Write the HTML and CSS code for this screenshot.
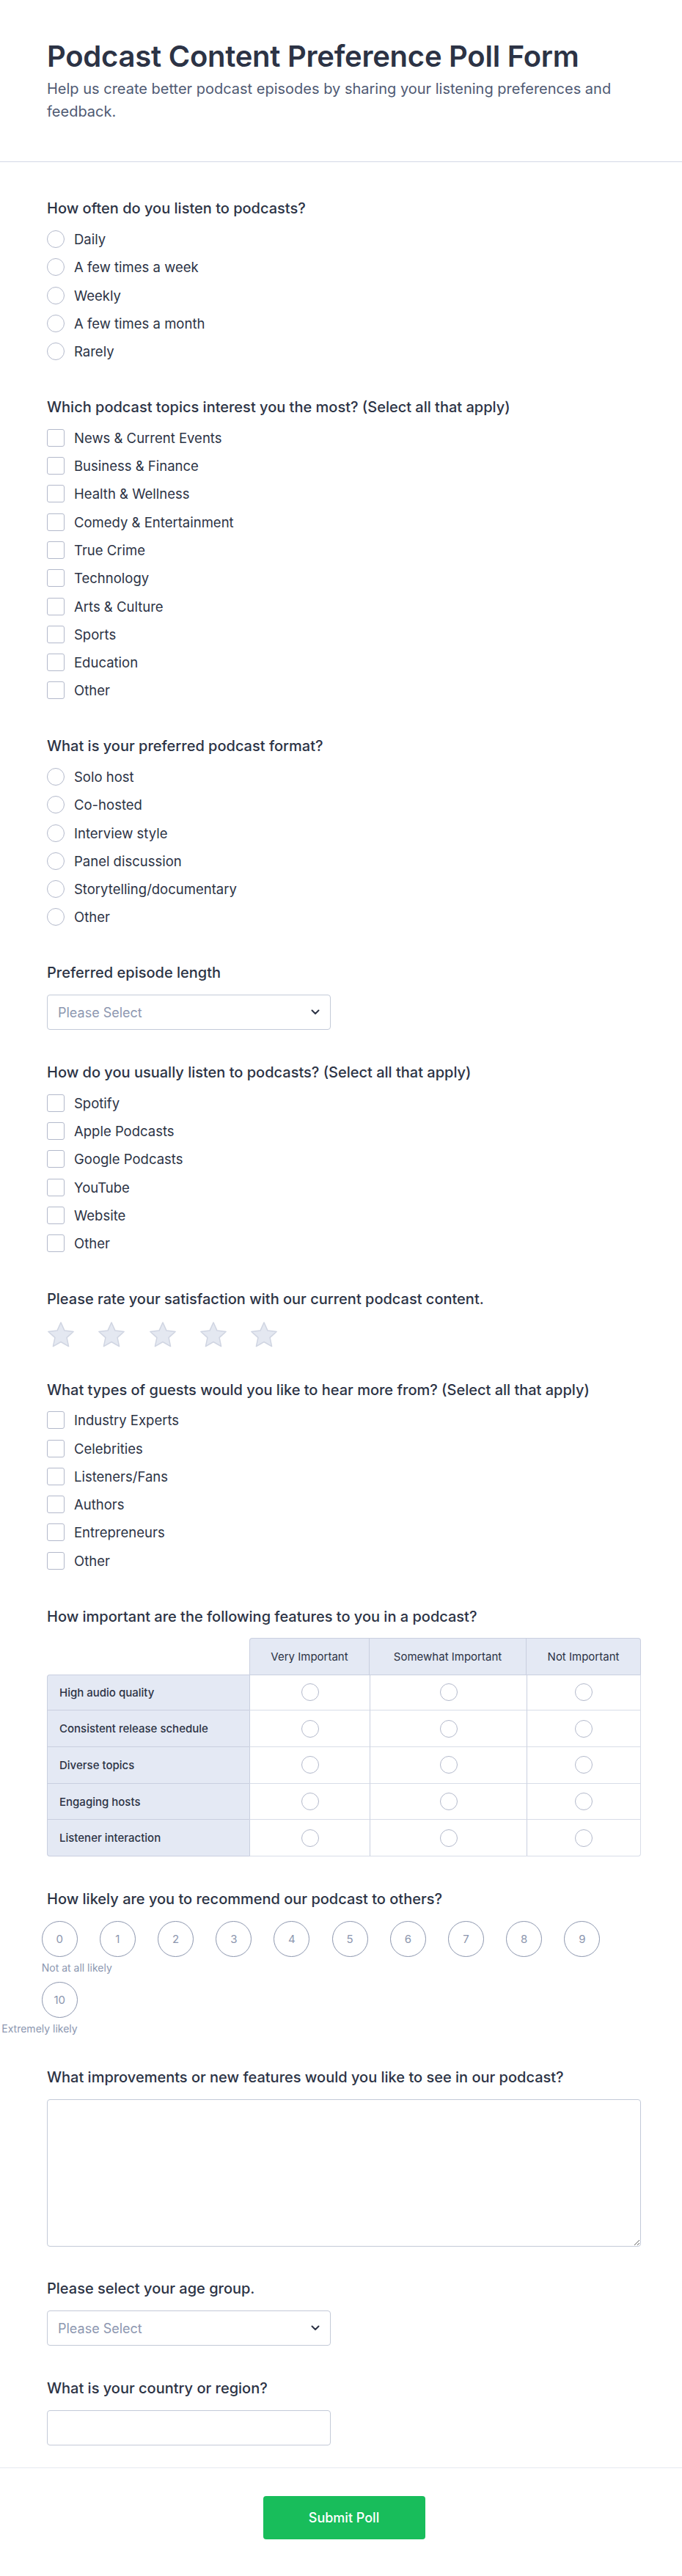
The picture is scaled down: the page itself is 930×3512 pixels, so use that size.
FILE: index.html
```html
<!DOCTYPE html>
<html lang="en">
<head>
<meta charset="utf-8">
<title>Podcast Content Preference Poll Form</title>
<link rel="stylesheet" href="styles.css">
</head>
<body>
<header class="header">
  <h1 class="title">Podcast Content Preference Poll Form</h1>
  <p class="subtitle">Help us create better podcast episodes by sharing your listening preferences and feedback.</p>
</header>

<form class="form-body">
  <div class="q">
    <div class="q-label">How often do you listen to podcasts?</div>
    <div class="options">
      <label class="opt"><span class="radio"></span>Daily</label>
      <label class="opt"><span class="radio"></span>A few times a week</label>
      <label class="opt"><span class="radio"></span>Weekly</label>
      <label class="opt"><span class="radio"></span>A few times a month</label>
      <label class="opt"><span class="radio"></span>Rarely</label>
    </div>
  </div>

  <div class="q">
    <div class="q-label">Which podcast topics interest you the most? (Select all that apply)</div>
    <div class="options">
      <label class="opt"><span class="check"></span>News &amp; Current Events</label>
      <label class="opt"><span class="check"></span>Business &amp; Finance</label>
      <label class="opt"><span class="check"></span>Health &amp; Wellness</label>
      <label class="opt"><span class="check"></span>Comedy &amp; Entertainment</label>
      <label class="opt"><span class="check"></span>True Crime</label>
      <label class="opt"><span class="check"></span>Technology</label>
      <label class="opt"><span class="check"></span>Arts &amp; Culture</label>
      <label class="opt"><span class="check"></span>Sports</label>
      <label class="opt"><span class="check"></span>Education</label>
      <label class="opt"><span class="check"></span>Other</label>
    </div>
  </div>

  <div class="q">
    <div class="q-label">What is your preferred podcast format?</div>
    <div class="options">
      <label class="opt"><span class="radio"></span>Solo host</label>
      <label class="opt"><span class="radio"></span>Co-hosted</label>
      <label class="opt"><span class="radio"></span>Interview style</label>
      <label class="opt"><span class="radio"></span>Panel discussion</label>
      <label class="opt"><span class="radio"></span>Storytelling/documentary</label>
      <label class="opt"><span class="radio"></span>Other</label>
    </div>
  </div>

  <div class="q">
    <div class="q-label">Preferred episode length</div>
    <div class="select">
      <span>Please Select</span>
      <svg class="chev" width="12" height="8" viewBox="0 0 12 8"><path d="M1.5 1.5l4.5 4.5 4.5-4.5" fill="none" stroke="#2c3345" stroke-width="2" stroke-linecap="round" stroke-linejoin="round"/></svg>
    </div>
  </div>

  <div class="q">
    <div class="q-label">How do you usually listen to podcasts? (Select all that apply)</div>
    <div class="options">
      <label class="opt"><span class="check"></span>Spotify</label>
      <label class="opt"><span class="check"></span>Apple Podcasts</label>
      <label class="opt"><span class="check"></span>Google Podcasts</label>
      <label class="opt"><span class="check"></span>YouTube</label>
      <label class="opt"><span class="check"></span>Website</label>
      <label class="opt"><span class="check"></span>Other</label>
    </div>
  </div>

  <div class="q">
    <div class="q-label">Please rate your satisfaction with our current podcast content.</div>
    <div class="stars">
      <svg class="star" width="38" height="35" viewBox="0 0 38 35"><polygon points="19,1 24,12.12 36.12,13.44 27.08,21.63 29.58,33.56 19,27.5 8.42,33.56 10.92,21.63 1.88,13.44 14,12.12"/></svg>
      <svg class="star" width="38" height="35" viewBox="0 0 38 35"><polygon points="19,1 24,12.12 36.12,13.44 27.08,21.63 29.58,33.56 19,27.5 8.42,33.56 10.92,21.63 1.88,13.44 14,12.12"/></svg>
      <svg class="star" width="38" height="35" viewBox="0 0 38 35"><polygon points="19,1 24,12.12 36.12,13.44 27.08,21.63 29.58,33.56 19,27.5 8.42,33.56 10.92,21.63 1.88,13.44 14,12.12"/></svg>
      <svg class="star" width="38" height="35" viewBox="0 0 38 35"><polygon points="19,1 24,12.12 36.12,13.44 27.08,21.63 29.58,33.56 19,27.5 8.42,33.56 10.92,21.63 1.88,13.44 14,12.12"/></svg>
      <svg class="star" width="38" height="35" viewBox="0 0 38 35"><polygon points="19,1 24,12.12 36.12,13.44 27.08,21.63 29.58,33.56 19,27.5 8.42,33.56 10.92,21.63 1.88,13.44 14,12.12"/></svg>
    </div>
  </div>

  <div class="q">
    <div class="q-label">What types of guests would you like to hear more from? (Select all that apply)</div>
    <div class="options">
      <label class="opt"><span class="check"></span>Industry Experts</label>
      <label class="opt"><span class="check"></span>Celebrities</label>
      <label class="opt"><span class="check"></span>Listeners/Fans</label>
      <label class="opt"><span class="check"></span>Authors</label>
      <label class="opt"><span class="check"></span>Entrepreneurs</label>
      <label class="opt"><span class="check"></span>Other</label>
    </div>
  </div>

  <div class="q">
    <div class="q-label">How important are the following features to you in a podcast?</div>
    <table class="matrix">
      <thead>
        <tr>
          <th class="blank"></th>
          <th class="col-h first">Very Important</th>
          <th class="col-h">Somewhat Important</th>
          <th class="col-h last">Not Important</th>
        </tr>
      </thead>
      <tbody>
        <tr><th class="row-h">High audio quality</th><td><span class="radio"></span></td><td><span class="radio"></span></td><td><span class="radio"></span></td></tr>
        <tr><th class="row-h">Consistent release schedule</th><td><span class="radio"></span></td><td><span class="radio"></span></td><td><span class="radio"></span></td></tr>
        <tr><th class="row-h">Diverse topics</th><td><span class="radio"></span></td><td><span class="radio"></span></td><td><span class="radio"></span></td></tr>
        <tr><th class="row-h">Engaging hosts</th><td><span class="radio"></span></td><td><span class="radio"></span></td><td><span class="radio"></span></td></tr>
        <tr><th class="row-h">Listener interaction</th><td><span class="radio"></span></td><td><span class="radio"></span></td><td><span class="radio"></span></td></tr>
      </tbody>
    </table>
  </div>

  <div class="q">
    <div class="q-label">How likely are you to recommend our podcast to others?</div>
    <div class="nps">
      <div class="nps-item"><span class="nps-circle">0</span><span class="nps-label">Not at all likely</span></div>
      <div class="nps-item"><span class="nps-circle">1</span></div>
      <div class="nps-item"><span class="nps-circle">2</span></div>
      <div class="nps-item"><span class="nps-circle">3</span></div>
      <div class="nps-item"><span class="nps-circle">4</span></div>
      <div class="nps-item"><span class="nps-circle">5</span></div>
      <div class="nps-item"><span class="nps-circle">6</span></div>
      <div class="nps-item"><span class="nps-circle">7</span></div>
      <div class="nps-item"><span class="nps-circle">8</span></div>
      <div class="nps-item"><span class="nps-circle">9</span></div>
      <div class="nps-item end"><span class="nps-circle">10</span><span class="nps-label">Extremely likely</span></div>
    </div>
  </div>

  <div class="q">
    <div class="q-label">What improvements or new features would you like to see in our podcast?</div>
    <textarea class="textarea"></textarea>
  </div>

  <div class="q">
    <div class="q-label">Please select your age group.</div>
    <div class="select">
      <span>Please Select</span>
      <svg class="chev" width="12" height="8" viewBox="0 0 12 8"><path d="M1.5 1.5l4.5 4.5 4.5-4.5" fill="none" stroke="#2c3345" stroke-width="2" stroke-linecap="round" stroke-linejoin="round"/></svg>
    </div>
  </div>

  <div class="q">
    <div class="q-label">What is your country or region?</div>
    <input class="text-input" type="text">
  </div>
</form>

<footer class="footer">
  <button class="submit" type="button">Submit Poll</button>
</footer>
</body>
</html>
```

FILE: styles.css
```css
* { box-sizing: border-box; }

body {
  margin: 0;
  background: #ffffff;
  color: #2c3345;
  font-family: Inter, "Noto Sans", sans-serif;
}

.header {
  padding: 53px 56px 51.5px 64px;
  border-bottom: 1px solid #d3d8e6;
}

.title {
  margin: 0 0 5.4px;
  font-size: 40px;
  line-height: 48px;
  font-weight: 600;
  letter-spacing: -0.25px;
  color: #2c3345;
}

.subtitle {
  margin: 0;
  font-size: 20px;
  line-height: 31px;
  color: #4f5a73;
}

.form-body {
  padding: 48.4px 56px 30px 64px;
}

.q {
  margin-bottom: 42.9px;
}

.q:last-child {
  margin-bottom: 0;
}

.q-label {
  font-size: 20px;
  line-height: 30px;
  font-weight: 500;
  margin-bottom: 14.7px;
  color: #2c3345;
}

.options {
  display: flex;
  flex-direction: column;
  gap: 14.3px;
  padding-bottom: 6px;
}

.opt {
  display: flex;
  align-items: center;
  gap: 13px;
  height: 24px;
  font-size: 18.5px;
  line-height: 24px;
  color: #2c3345;
}

.radio,
.check {
  flex: none;
  display: inline-block;
  width: 24px;
  height: 24px;
  border: 1px solid #b3b9cb;
  background: #fff;
}

.radio { border-radius: 50%; }
.check { border-radius: 3px; }

.select {
  width: 387px;
  height: 48px;
  border: 1px solid #c3cad8;
  border-radius: 4px;
  display: flex;
  align-items: center;
  justify-content: space-between;
  padding: 0 14px 0 14px;
  font-size: 18px;
  color: #8d97b0;
  background: #fff;
}

.chev { display: block; }

.stars {
  display: flex;
  gap: 31.3px;
  padding-top: 1px;
}

.star {
  display: block;
}

.star polygon {
  fill: #e4e8f1;
  stroke: #d0d5e2;
  stroke-width: 1.5;
  stroke-linejoin: round;
}

.matrix {
  width: 810px;
  border-collapse: separate;
  border-spacing: 0;
  table-layout: fixed;
  margin-top: 1px;
}

.matrix th,
.matrix td {
  padding: 0;
}

.matrix th.blank { width: 276px; }
.matrix th.col-h:nth-child(2) { width: 164px; }
.matrix th.col-h:nth-child(3) { width: 214px; }
.matrix th.col-h:nth-child(4) { width: 156px; }

.col-h {
  height: 49.3px;
  background: #e4e9f4;
  border-top: 1px solid #c9cfdf;
  border-right: 1px solid #c9cfdf;
  font-size: 15px;
  font-weight: 400;
  color: #2c3345;
  text-align: center;
}

.col-h.first {
  border-left: 1px solid #c9cfdf;
  border-top-left-radius: 4px;
}

.col-h.last {
  border-top-right-radius: 4px;
}

.row-h {
  height: 49.7px;
  background: #e4e9f4;
  border-left: 1px solid #c9cfdf;
  border-bottom: 1px solid #c9cfdf;
  font-size: 15px;
  font-weight: 500;
  color: #2c3345;
  text-align: left;
  padding-left: 16px !important;
}

.matrix tbody tr:first-child .row-h {
  border-top: 1px solid #c9cfdf;
  border-top-left-radius: 4px;
}

.matrix tbody tr:last-child .row-h {
  border-bottom-left-radius: 4px;
}

.matrix td {
  height: 49.7px;
  text-align: center;
  vertical-align: middle;
  border-left: 1px solid #c9cfdf;
  border-bottom: 1px solid #d8dde8;
  background: #fff;
}

.matrix td:last-child {
  border-right: 1px solid #d8dde8;
}

.matrix tbody tr:first-child td {
  border-top: 1px solid #c9cfdf;
}

.matrix tbody tr:last-child td:last-child {
  border-bottom-right-radius: 4px;
}

.matrix td .radio {
  vertical-align: middle;
}

.nps {
  display: flex;
  flex-wrap: wrap;
  align-items: flex-start;
  column-gap: 30.2px;
  row-gap: 10.6px;
  margin-left: -7.3px;
}

.nps-item {
  width: 49px;
  display: flex;
  flex-direction: column;
  align-items: flex-start;
}

.nps-item.end {
  align-items: flex-end;
}

.nps-circle {
  width: 49px;
  height: 49px;
  border-radius: 50%;
  border: 1.5px solid #8c96ae;
  display: flex;
  align-items: center;
  justify-content: center;
  font-size: 15px;
  color: #8c96ae;
}

.nps-label {
  margin-top: 6.4px;
  font-size: 14px;
  line-height: 17px;
  white-space: nowrap;
  color: #8c97b0;
}

.textarea {
  display: block;
  width: 810px;
  height: 201px;
  border: 1px solid #c3cad8;
  border-radius: 4px;
  resize: vertical;
  font-family: inherit;
  font-size: 16px;
  margin: 0;
}

.text-input {
  display: block;
  width: 387px;
  height: 48px;
  border: 1px solid #c3cad8;
  border-radius: 4px;
  font-family: inherit;
  font-size: 16px;
  margin: 0;
}

.footer {
  border-top: 1px solid #e6e9f0;
  padding: 38px 56px 50px 64px;
  display: flex;
  justify-content: center;
}

.submit {
  width: 221px;
  height: 59px;
  border: none;
  border-radius: 4px;
  background: #18bd5b;
  color: #ffffff;
  font-family: inherit;
  font-size: 18px;
  font-weight: 500;
}
```
